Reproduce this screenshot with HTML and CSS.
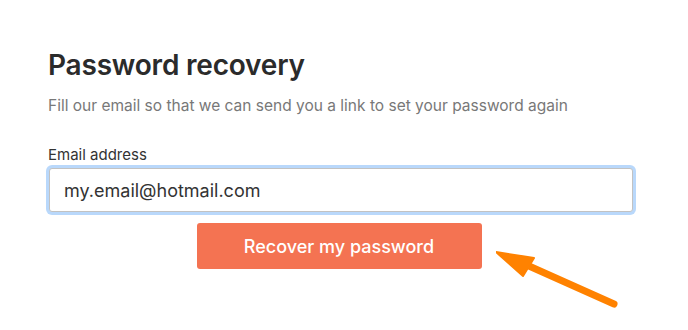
FILE: index.html
```html
<!DOCTYPE html>
<html lang="en">
<head>
<meta charset="utf-8">
<title>Password recovery</title>
<link rel="stylesheet" href="styles.css">
</head>
<body>
<main class="page">
  <form class="recovery">
    <h1 class="title">Password recovery</h1>
    <p class="subtitle">Fill our email so that we can send you a link to set your password again</p>
    <label class="label" for="email">Email address</label>
    <div class="field">
      <input class="input" id="email" type="text" value="my.email@hotmail.com">
    </div>
    <div class="actions">
      <button class="button" type="button">Recover my password</button>
    </div>
  </form>
  <svg class="arrow" width="130" height="64" viewBox="0 0 130 64" aria-hidden="true">
    <line x1="118" y1="56" x2="24" y2="14" stroke="#ff8200" stroke-width="7" stroke-linecap="round"/>
    <polygon points="0,4 38,10 27,28" fill="#ff8200" stroke="#ff8200" stroke-width="2" stroke-linejoin="round"/>
  </svg>
</main>
</body>
</html>
```
FILE: styles.css
```css
* { box-sizing: border-box; }
html, body { margin: 0; padding: 0; background: #ffffff; }
body { font-family: Inter, "Noto Sans", sans-serif; color: #333333; }
.page { position: relative; width: 688px; height: 330px; padding: 47px 0 0 48px; }
.recovery { width: 586px; display: flex; flex-direction: column; }
.title { margin: 0; font-size: 28px; line-height: 36px; font-weight: 600; color: #2b2b2b; letter-spacing: -0.2px; }
.subtitle { margin: 13px 0 0; font-size: 15.5px; line-height: 20px; color: #787878; }
.label { margin-top: 30px; font-size: 15px; line-height: 18px; color: #333333; }
.field { margin-top: 4px; padding: 0 1px; }
.input { display: block; width: 584px; height: 44px; border: 1px solid #c2c2c2; border-radius: 3px; box-shadow: 0 0 0 3px #b9d8fb; padding: 0 14px; font-family: Inter, "Noto Sans", sans-serif; font-size: 18px; color: #333333; background: #fff; outline: none; }
.actions { display: flex; justify-content: center; margin-top: 11px; padding-right: 4px; }
.button { width: 285px; height: 46px; border: 0; border-radius: 3px; background: #f47352; color: #ffffff; font-family: Inter, "Noto Sans", sans-serif; font-size: 18px; font-weight: 500; }
.arrow { position: absolute; left: 496px; top: 248px; }
```
